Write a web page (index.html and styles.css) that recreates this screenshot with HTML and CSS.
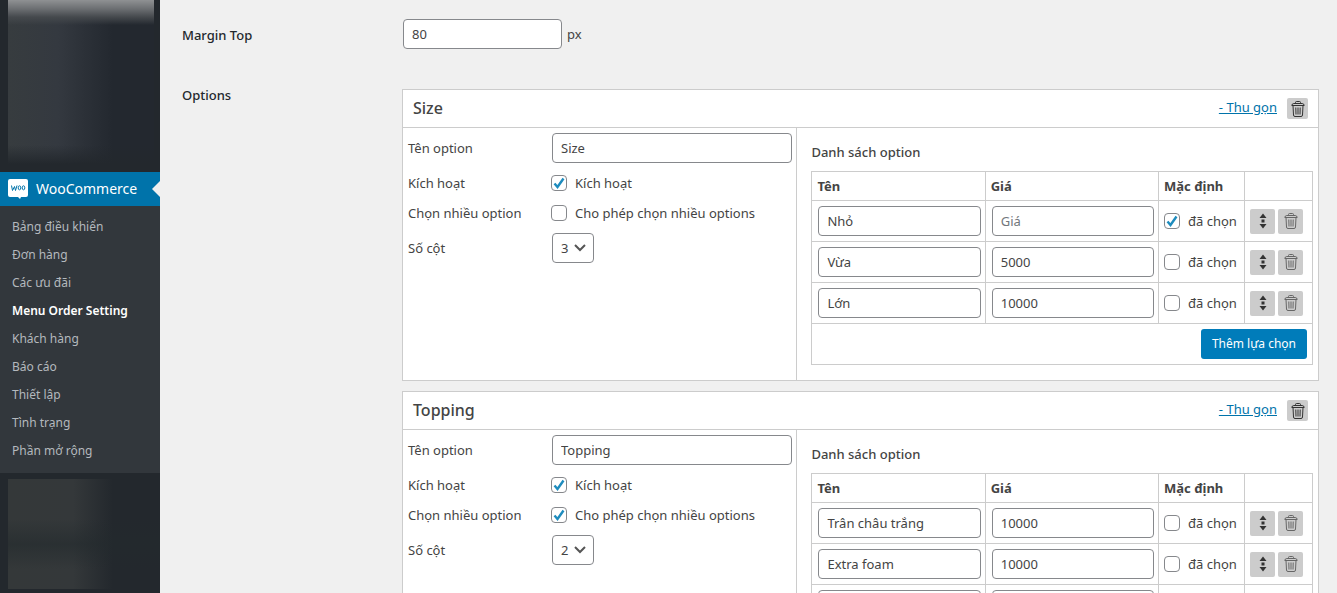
FILE: index.html
```html
<!DOCTYPE html>
<html lang="vi">
<head>
    <meta charset="UTF-8">
    <meta name="viewport" content="width=device-width, initial-scale=1.0">
    <title>Menu Order Setting</title>
    <link rel="stylesheet" href="styles.css">
</head>
<body>
    <!-- Shared icons -->
    <svg class="icon-defs" aria-hidden="true">
        <symbol id="icon-trash" viewBox="0 0 14 16">
            <path d="M4.5 2.500V1.500Q4.500.5 5.500.5h3q1 0 1 1v1M.8 4.500Q1 2.500 2.800 2.500h8.400q1.800 0 2 2z" fill="none" stroke="currentColor"/>
            <path d="M2 4.500l.5 9.500q0 1.500 1.500 1.500h6q1.500 0 1.500-1.500L12 4.500M4.800 6.500l.2 7M7 6.500v7M9.200 6.500l-.2 7" fill="none" stroke="currentColor"/>
        </symbol>
        <symbol id="icon-sort" viewBox="0 0 8 16">
            <path d="M4 .5L7.500 5h-7zM4 15.500L7.500 11h-7zM2.500 6.500h3v3h-3z" fill="currentColor"/>
        </symbol>
    </svg>

    <div class="wrapper">
        <!-- Sidebar -->
        <nav class="sidebar">
            <div class="menu-hidden menu-hidden-top"></div>
            <a href="#" class="menu-current">
                <svg class="woo-icon" viewBox="0 0 20 20" aria-hidden="true">
                    <path d="M2 0h16q2 0 2 2v14q0 2-2 2h-5l-1 2-2-2H2q-2 0-2-2V2q0-2 2-2z" fill="#fff"/>
                    <path d="M3.500 6.500l1 5 2-4 1 4 1.500-5" fill="none" stroke="#0073aa" stroke-linejoin="round"/>
                    <ellipse cx="11.500" cy="8.800" rx="1.300" ry="2" fill="none" stroke="#0073aa"/>
                    <ellipse cx="15.500" cy="8.800" rx="1.300" ry="2" fill="none" stroke="#0073aa"/>
                </svg>
                WooCommerce
            </a>
            <ul class="submenu">
                <li><a href="#">Bảng điều khiển</a></li>
                <li><a href="#">Đơn hàng</a></li>
                <li><a href="#">Các ưu đãi</a></li>
                <li><a href="#" class="active">Menu Order Setting</a></li>
                <li><a href="#">Khách hàng</a></li>
                <li><a href="#">Báo cáo</a></li>
                <li><a href="#">Thiết lập</a></li>
                <li><a href="#">Tình trạng</a></li>
                <li><a href="#">Phần mở rộng</a></li>
            </ul>
            <div class="menu-hidden menu-hidden-bottom"></div>
        </nav>

        <!-- Settings -->
        <main class="content">
            <div class="setting">
                <label class="setting-label" for="margin_top">Margin Top</label>
                <div class="setting-field">
                    <input type="text" id="margin_top" class="margin-input" value="80"> px
                </div>
            </div>

            <div class="setting">
                <div class="setting-label">Options</div>
                <div class="option-list">
                    <!-- Size -->
                    <section class="option-box">
                        <header class="option-header">
                            <h2>Size</h2>
                            <a href="#">- Thu gọn</a>
                            <button type="button" class="icon-button" aria-label="Xóa"><svg class="trash"><use href="#icon-trash"/></svg></button>
                        </header>
                        <div class="option-body">
                            <div class="option-fields">
                                <div class="field">
                                    <label for="size_name">Tên option</label>
                                    <input type="text" id="size_name" value="Size">
                                </div>
                                <div class="field field-check">
                                    <span>Kích hoạt</span>
                                    <label><input type="checkbox" checked> Kích hoạt</label>
                                </div>
                                <div class="field field-check">
                                    <span>Chọn nhiều option</span>
                                    <label><input type="checkbox"> Cho phép chọn nhiều options</label>
                                </div>
                                <div class="field">
                                    <label for="size_columns">Số cột</label>
                                    <select id="size_columns">
                                        <option>3</option>
                                    </select>
                                </div>
                            </div>
                            <div class="option-values">
                                <h3>Danh sách option</h3>
                                <table>
                                    <thead>
                                        <tr>
                                            <th>Tên</th>
                                            <th>Giá</th>
                                            <th class="col-default">Mặc định</th>
                                            <th class="col-actions"></th>
                                        </tr>
                                    </thead>
                                    <tbody>
                                        <tr>
                                            <td><input type="text" aria-label="Tên" value="Nhỏ"></td>
                                            <td><input type="text" aria-label="Giá" placeholder="Giá"></td>
                                            <td><label><input type="checkbox" checked> đã chọn</label></td>
                                            <td>
                                                <div class="actions">
                                                    <button type="button" class="icon-button" aria-label="Di chuyển"><svg class="sort"><use href="#icon-sort"/></svg></button>
                                                    <button type="button" class="icon-button" aria-label="Xóa"><svg class="trash"><use href="#icon-trash"/></svg></button>
                                                </div>
                                            </td>
                                        </tr>
                                        <tr>
                                            <td><input type="text" aria-label="Tên" value="Vừa"></td>
                                            <td><input type="text" aria-label="Giá" value="5000"></td>
                                            <td><label><input type="checkbox"> đã chọn</label></td>
                                            <td>
                                                <div class="actions">
                                                    <button type="button" class="icon-button" aria-label="Di chuyển"><svg class="sort"><use href="#icon-sort"/></svg></button>
                                                    <button type="button" class="icon-button" aria-label="Xóa"><svg class="trash"><use href="#icon-trash"/></svg></button>
                                                </div>
                                            </td>
                                        </tr>
                                        <tr>
                                            <td><input type="text" aria-label="Tên" value="Lớn"></td>
                                            <td><input type="text" aria-label="Giá" value="10000"></td>
                                            <td><label><input type="checkbox"> đã chọn</label></td>
                                            <td>
                                                <div class="actions">
                                                    <button type="button" class="icon-button" aria-label="Di chuyển"><svg class="sort"><use href="#icon-sort"/></svg></button>
                                                    <button type="button" class="icon-button" aria-label="Xóa"><svg class="trash"><use href="#icon-trash"/></svg></button>
                                                </div>
                                            </td>
                                        </tr>
                                    </tbody>
                                    <tfoot>
                                        <tr>
                                            <td colspan="4"><button type="button" class="add-button">Thêm lựa chọn</button></td>
                                        </tr>
                                    </tfoot>
                                </table>
                            </div>
                        </div>
                    </section>

                    <!-- Topping -->
                    <section class="option-box">
                        <header class="option-header">
                            <h2>Topping</h2>
                            <a href="#">- Thu gọn</a>
                            <button type="button" class="icon-button" aria-label="Xóa"><svg class="trash"><use href="#icon-trash"/></svg></button>
                        </header>
                        <div class="option-body">
                            <div class="option-fields">
                                <div class="field">
                                    <label for="topping_name">Tên option</label>
                                    <input type="text" id="topping_name" value="Topping">
                                </div>
                                <div class="field field-check">
                                    <span>Kích hoạt</span>
                                    <label><input type="checkbox" checked> Kích hoạt</label>
                                </div>
                                <div class="field field-check">
                                    <span>Chọn nhiều option</span>
                                    <label><input type="checkbox" checked> Cho phép chọn nhiều options</label>
                                </div>
                                <div class="field">
                                    <label for="topping_columns">Số cột</label>
                                    <select id="topping_columns">
                                        <option>2</option>
                                    </select>
                                </div>
                            </div>
                            <div class="option-values">
                                <h3>Danh sách option</h3>
                                <table>
                                    <thead>
                                        <tr>
                                            <th>Tên</th>
                                            <th>Giá</th>
                                            <th class="col-default">Mặc định</th>
                                            <th class="col-actions"></th>
                                        </tr>
                                    </thead>
                                    <tbody>
                                        <tr>
                                            <td><input type="text" aria-label="Tên" value="Trân châu trắng"></td>
                                            <td><input type="text" aria-label="Giá" value="10000"></td>
                                            <td><label><input type="checkbox"> đã chọn</label></td>
                                            <td>
                                                <div class="actions">
                                                    <button type="button" class="icon-button" aria-label="Di chuyển"><svg class="sort"><use href="#icon-sort"/></svg></button>
                                                    <button type="button" class="icon-button" aria-label="Xóa"><svg class="trash"><use href="#icon-trash"/></svg></button>
                                                </div>
                                            </td>
                                        </tr>
                                        <tr>
                                            <td><input type="text" aria-label="Tên" value="Extra foam"></td>
                                            <td><input type="text" aria-label="Giá" value="10000"></td>
                                            <td><label><input type="checkbox"> đã chọn</label></td>
                                            <td>
                                                <div class="actions">
                                                    <button type="button" class="icon-button" aria-label="Di chuyển"><svg class="sort"><use href="#icon-sort"/></svg></button>
                                                    <button type="button" class="icon-button" aria-label="Xóa"><svg class="trash"><use href="#icon-trash"/></svg></button>
                                                </div>
                                            </td>
                                        </tr>
                                        <tr>
                                            <td><input type="text" aria-label="Tên"></td>
                                            <td><input type="text" aria-label="Giá"></td>
                                            <td><input type="checkbox" aria-label="Mặc định"></td>
                                            <td>
                                                <div class="actions">
                                                    <button type="button" class="icon-button" aria-label="Di chuyển"><svg class="sort"><use href="#icon-sort"/></svg></button>
                                                    <button type="button" class="icon-button" aria-label="Xóa"><svg class="trash"><use href="#icon-trash"/></svg></button>
                                                </div>
                                            </td>
                                        </tr>
                                    </tbody>
                                </table>
                            </div>
                        </div>
                    </section>
                </div>
            </div>
        </main>
    </div>
</body>
</html>
```
FILE: styles.css
```css
* {
    box-sizing: border-box;
}
body {
    margin: 0;
    background-color: #f0f0f0;
    color: #444;
    font-family: "Noto Sans", "Open Sans", sans-serif;
    font-size: 13px;
    line-height: 20px;
}
.icon-defs {
    display: none;
}
.wrapper {
    display: flex;
    min-height: 100vh;
}

/* Sidebar */
.sidebar {
    flex: 0 0 160px;
    background-color: #23282d;
}
.menu-hidden {
    margin-left: 8px;
}
.menu-hidden-top {
    height: 164px;
    margin-right: 6px;
    margin-bottom: 8px;
    background:
        linear-gradient(#8f9193, #6b6e71 9px, #45494d 17px, rgba(35, 40, 45, 0) 25px),
        linear-gradient(rgba(35, 40, 45, 0) 145px, #23282d),
        linear-gradient(to right, #373c3f, #343940 50px, #23282f 105px);
}
.menu-hidden-bottom {
    height: 110px;
    margin-top: 6px;
    background:
        linear-gradient(rgba(44, 50, 52, 0) 40px, rgba(35, 42, 45, 0.6) 65px, rgba(44, 50, 52, 0) 90px),
        linear-gradient(to right, #343839, #34383a 65px, #23282d 105px);
}
.menu-current {
    display: flex;
    align-items: center;
    gap: 8px;
    height: 34px;
    padding-left: 8px;
    position: relative;
    background-color: #0073aa;
    color: #fff;
    font-size: 14px;
    text-decoration: none;
}
.menu-current::after {
    content: "";
    position: absolute;
    right: 0;
    top: 9px;
    border: 8px solid transparent;
    border-left: 0;
    border-right-color: #f0f0f0;
}
.woo-icon {
    width: 20px;
    height: 20px;
}
.submenu {
    margin: 0;
    padding: 7px 0 8px;
    background-color: #32373c;
    list-style: none;
}
.submenu a {
    display: block;
    padding: 4px 12px;
    color: #b4b9be;
    font-size: 12px;
    text-decoration: none;
    white-space: nowrap;
}
.submenu .active {
    color: #fff;
    font-weight: 600;
}

/* Settings */
.content {
    flex: 1;
    min-width: 0;
    padding: 19px 18px 0 22px;
}
.setting {
    display: grid;
    grid-template-columns: 220px minmax(0, 1fr);
    margin-bottom: 40px;
}
.setting-label {
    padding-top: 6px;
    color: #23282d;
    font-weight: 500;
}
.setting + .setting .setting-label {
    padding-top: 0;
    margin-top: -4px;
}
.setting-field {
    display: flex;
    align-items: center;
    gap: 4px;
}
input[type="text"],
select {
    height: 30px;
    margin: 0 1px;
    padding: 0 8px;
    border: 1px solid #86888c;
    border-radius: 4px;
    background-color: #fff;
    color: #444;
    font: inherit;
}
input::placeholder {
    color: #72777c;
}
.margin-input {
    width: 159px;
}
select {
    width: 42px;
    appearance: none;
    background: #fff url("data:image/svg+xml,%3Csvg xmlns='http://www.w3.org/2000/svg' viewBox='0 0 12 8'%3E%3Cpath d='M1 1l5 5 5-5' fill='none' stroke='%23555' stroke-width='2'/%3E%3C/svg%3E") no-repeat right 7px center / 12px 8px;
}
input[type="checkbox"] {
    flex: none;
    width: 16px;
    height: 16px;
    margin: 0;
    appearance: none;
    border: 1px solid #86888c;
    border-radius: 4px;
    background-color: #fff;
}
input[type="checkbox"]:checked {
    background: #fff url("data:image/svg+xml,%3Csvg xmlns='http://www.w3.org/2000/svg' viewBox='0 0 12 12'%3E%3Cpath d='M1.500 6.500l3 3.500 6-8.500' fill='none' stroke='%231e8cbe' stroke-width='2.400'/%3E%3C/svg%3E") no-repeat center / 12px 12px;
}

/* Option boxes */
.option-box {
    margin-bottom: 10px;
    border: 1px solid #ccc;
    background-color: #fff;
}
.option-header {
    display: flex;
    align-items: center;
    gap: 10px;
    height: 38px;
    padding: 0 10px;
    border-bottom: 1px solid #ccc;
}
.option-header h2 {
    flex: 1;
    margin: 0;
    padding-bottom: 2px;
    font-size: 16px;
    font-weight: 500;
}
.option-header a {
    padding-bottom: 3px;
    color: #0073aa;
}
.option-body {
    display: grid;
    grid-template-columns: minmax(0, 394fr) minmax(0, 520fr);
}
.option-fields {
    border-right: 1px solid #ccc;
}
.field {
    display: grid;
    grid-template-columns: 143px minmax(0, 1fr);
    align-items: center;
    padding: 5px 3px 5px 5px;
}
.field-check {
    height: 30px;
    padding-top: 0;
    padding-bottom: 0;
}
.field-check label,
td label {
    display: flex;
    align-items: center;
    gap: 8px;
    white-space: nowrap;
}
.option-values {
    padding: 14px 5px 15px 14px;
}
.option-values h3 {
    margin: 0 0 9px;
    font-size: 13px;
    font-weight: 500;
}
table {
    width: 100%;
    table-layout: fixed;
    border-collapse: collapse;
}
th,
td {
    padding: 5px 3px 5px 5px;
    border: 1px solid #ccc;
}
th {
    padding: 4px 5px;
    text-align: left;
    font-weight: 700;
    white-space: nowrap;
}
.col-default {
    width: 86px;
}
.col-actions {
    width: 68px;
}
td input[type="text"] {
    display: block;
    width: calc(100% - 2px);
}
tfoot td {
    padding-right: 5px;
}
.actions {
    display: flex;
    gap: 3px;
}
.icon-button {
    display: flex;
    align-items: center;
    justify-content: center;
    width: 21px;
    height: 21px;
    padding: 0;
    border: 0;
    border-radius: 2px;
    background-color: #ccc;
    color: #333;
    cursor: pointer;
}
.actions .icon-button {
    width: 25px;
    height: 25px;
}
.trash {
    width: 14px;
    height: 16px;
}
.actions .trash {
    color: #666;
}
.sort {
    width: 8px;
    height: 16px;
}
.add-button {
    display: block;
    height: 30px;
    margin-left: auto;
    padding: 0 11px;
    border: 0;
    border-radius: 3px;
    background-color: #007cba;
    color: #fff;
    font: inherit;
    font-size: 12px;
    white-space: nowrap;
    cursor: pointer;
}
```
